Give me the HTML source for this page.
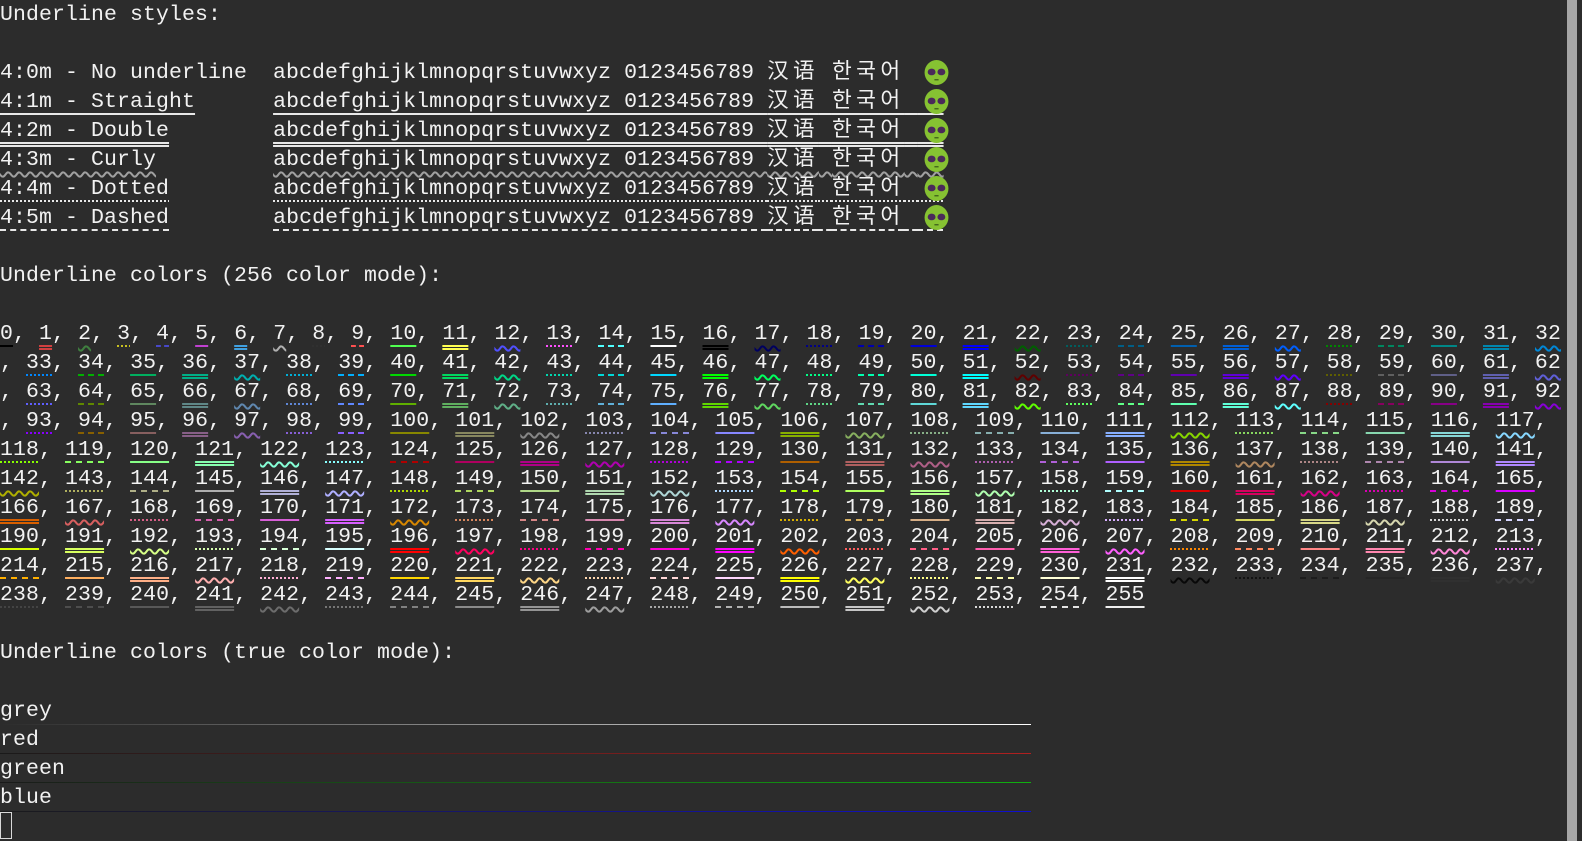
<!DOCTYPE html>
<html><head><meta charset="utf-8"><style>
html,body{margin:0;padding:0;background:#2c2c2c;width:1582px;height:841px;overflow:hidden}
#wrap{position:absolute;left:0;top:0;width:1582px;height:841px;overflow:hidden}
pre{margin:0;position:absolute;left:0;top:1px;font-family:"Liberation Mono","Noto Sans CJK SC",monospace;font-size:21.5px;letter-spacing:0.1px;line-height:29px;color:#f2f2f2;white-space:pre}
u{text-decoration-line:underline;text-decoration-color:var(--c,#e8e8e8);text-decoration-thickness:2px;text-underline-offset:6px;text-decoration-skip-ink:none}
.a{text-decoration-style:solid}.b{text-decoration-style:double;text-decoration-thickness:1.5px}.c{text-decoration-style:wavy;text-decoration-thickness:1.5px}.d{text-decoration-style:dotted;text-decoration-thickness:1.5px}.e{text-decoration-style:dashed;text-decoration-thickness:1.5px}
.w{letter-spacing:4.4px}
.em{position:relative}
.em svg{position:absolute;left:6px;top:-2px}
.tl{position:absolute;left:0;width:1031px;height:1px}
.cur{position:absolute;left:0;top:812px;width:10px;height:25px;border:1px solid #d8d8d8}
.sb{position:absolute;left:1567px;top:0;width:10px;height:841px;background:#a6a6a6}
</style></head><body><div id="wrap">
<pre>Underline styles:

4:0m - No underline  abcdefghijklmnopqrstuvwxyz 0123456789 <span class=w>汉语</span> <span class=w>한국어</span> <span class=em>  <svg width="25" height="27" viewBox="0 0 24 26"><ellipse cx="12" cy="13" rx="11.5" ry="12" fill="#86c232"/><ellipse cx="7.3" cy="12.5" rx="3.8" ry="3.2" fill="#4a2a5a"/><ellipse cx="16.7" cy="12.5" rx="3.8" ry="3.2" fill="#4a2a5a"/><path d="M10 20 h4" stroke="#3a5a1a" stroke-width="1.2"/></svg></span>
<u class=a>4:1m - Straight</u>      <u class=a>abcdefghijklmnopqrstuvwxyz 0123456789 <span class=w>汉语</span> <span class=w>한국어</span> <span class=em>  <svg width="25" height="27" viewBox="0 0 24 26"><ellipse cx="12" cy="13" rx="11.5" ry="12" fill="#86c232"/><ellipse cx="7.3" cy="12.5" rx="3.8" ry="3.2" fill="#4a2a5a"/><ellipse cx="16.7" cy="12.5" rx="3.8" ry="3.2" fill="#4a2a5a"/><path d="M10 20 h4" stroke="#3a5a1a" stroke-width="1.2"/></svg></span></u>
<u class=b>4:2m - Double</u>        <u class=b>abcdefghijklmnopqrstuvwxyz 0123456789 <span class=w>汉语</span> <span class=w>한국어</span> <span class=em>  <svg width="25" height="27" viewBox="0 0 24 26"><ellipse cx="12" cy="13" rx="11.5" ry="12" fill="#86c232"/><ellipse cx="7.3" cy="12.5" rx="3.8" ry="3.2" fill="#4a2a5a"/><ellipse cx="16.7" cy="12.5" rx="3.8" ry="3.2" fill="#4a2a5a"/><path d="M10 20 h4" stroke="#3a5a1a" stroke-width="1.2"/></svg></span></u>
<u class=c style="--c:#a0a0a0">4:3m - Curly</u>         <u class=c style="--c:#a0a0a0">abcdefghijklmnopqrstuvwxyz 0123456789 <span class=w>汉语</span> <span class=w>한국어</span> <span class=em>  <svg width="25" height="27" viewBox="0 0 24 26"><ellipse cx="12" cy="13" rx="11.5" ry="12" fill="#86c232"/><ellipse cx="7.3" cy="12.5" rx="3.8" ry="3.2" fill="#4a2a5a"/><ellipse cx="16.7" cy="12.5" rx="3.8" ry="3.2" fill="#4a2a5a"/><path d="M10 20 h4" stroke="#3a5a1a" stroke-width="1.2"/></svg></span></u>
<u class=d>4:4m - Dotted</u>        <u class=d>abcdefghijklmnopqrstuvwxyz 0123456789 <span class=w>汉语</span> <span class=w>한국어</span> <span class=em>  <svg width="25" height="27" viewBox="0 0 24 26"><ellipse cx="12" cy="13" rx="11.5" ry="12" fill="#86c232"/><ellipse cx="7.3" cy="12.5" rx="3.8" ry="3.2" fill="#4a2a5a"/><ellipse cx="16.7" cy="12.5" rx="3.8" ry="3.2" fill="#4a2a5a"/><path d="M10 20 h4" stroke="#3a5a1a" stroke-width="1.2"/></svg></span></u>
<u class=e>4:5m - Dashed</u>        <u class=e>abcdefghijklmnopqrstuvwxyz 0123456789 <span class=w>汉语</span> <span class=w>한국어</span> <span class=em>  <svg width="25" height="27" viewBox="0 0 24 26"><ellipse cx="12" cy="13" rx="11.5" ry="12" fill="#86c232"/><ellipse cx="7.3" cy="12.5" rx="3.8" ry="3.2" fill="#4a2a5a"/><ellipse cx="16.7" cy="12.5" rx="3.8" ry="3.2" fill="#4a2a5a"/><path d="M10 20 h4" stroke="#3a5a1a" stroke-width="1.2"/></svg></span></u>

Underline colors (256 color mode):

<u class=a style=--c:#000000>0</u>, <u class=b style=--c:#d04040>1</u>, <u class=c style=--c:#3f7f3f>2</u>, <u class=d style=--c:#c8c020>3</u>, <u class=e style=--c:#4848c8>4</u>, <u class=a style=--c:#c040d0>5</u>, <u class=b style=--c:#40a0e0>6</u>, <u class=c style=--c:#b0b0b0>7</u>, <u class=d style=--c:#303030>8</u>, <u class=e style=--c:#ff5050>9</u>, <u class=a style=--c:#50ff50>10</u>, <u class=b style=--c:#ffff50>11</u>, <u class=c style=--c:#5050ff>12</u>, <u class=d style=--c:#ff50ff>13</u>, <u class=e style=--c:#50ffff>14</u>, <u class=a style=--c:#ffffff>15</u>, <u class=b style=--c:#000000>16</u>, <u class=c style=--c:#00005f>17</u>, <u class=d style=--c:#000087>18</u>, <u class=e style=--c:#0000af>19</u>, <u class=a style=--c:#0000d7>20</u>, <u class=b style=--c:#0000ff>21</u>, <u class=c style=--c:#005f00>22</u>, <u class=d style=--c:#005f5f>23</u>, <u class=e style=--c:#005f87>24</u>, <u class=a style=--c:#005faf>25</u>, <u class=b style=--c:#005fd7>26</u>, <u class=c style=--c:#005fff>27</u>, <u class=d style=--c:#008700>28</u>, <u class=e style=--c:#00875f>29</u>, <u class=a style=--c:#008787>30</u>, <u class=b style=--c:#0087af>31</u>, <u class=c style=--c:#0087d7>32</u>
, <u class=d style=--c:#0087ff>33</u>, <u class=e style=--c:#00af00>34</u>, <u class=a style=--c:#00af5f>35</u>, <u class=b style=--c:#00af87>36</u>, <u class=c style=--c:#00afaf>37</u>, <u class=d style=--c:#00afd7>38</u>, <u class=e style=--c:#00afff>39</u>, <u class=a style=--c:#00d700>40</u>, <u class=b style=--c:#00d75f>41</u>, <u class=c style=--c:#00d787>42</u>, <u class=d style=--c:#00d7af>43</u>, <u class=e style=--c:#00d7d7>44</u>, <u class=a style=--c:#00d7ff>45</u>, <u class=b style=--c:#00ff00>46</u>, <u class=c style=--c:#00ff5f>47</u>, <u class=d style=--c:#00ff87>48</u>, <u class=e style=--c:#00ffaf>49</u>, <u class=a style=--c:#00ffd7>50</u>, <u class=b style=--c:#00ffff>51</u>, <u class=c style=--c:#5f0000>52</u>, <u class=d style=--c:#5f005f>53</u>, <u class=e style=--c:#5f0087>54</u>, <u class=a style=--c:#5f00af>55</u>, <u class=b style=--c:#5f00d7>56</u>, <u class=c style=--c:#5f00ff>57</u>, <u class=d style=--c:#5f5f00>58</u>, <u class=e style=--c:#5f5f5f>59</u>, <u class=a style=--c:#5f5f87>60</u>, <u class=b style=--c:#5f5faf>61</u>, <u class=c style=--c:#5f5fd7>62</u>
, <u class=d style=--c:#5f5fff>63</u>, <u class=e style=--c:#5f8700>64</u>, <u class=a style=--c:#5f875f>65</u>, <u class=b style=--c:#5f8787>66</u>, <u class=c style=--c:#5f87af>67</u>, <u class=d style=--c:#5f87d7>68</u>, <u class=e style=--c:#5f87ff>69</u>, <u class=a style=--c:#5faf00>70</u>, <u class=b style=--c:#5faf5f>71</u>, <u class=c style=--c:#5faf87>72</u>, <u class=d style=--c:#5fafaf>73</u>, <u class=e style=--c:#5fafd7>74</u>, <u class=a style=--c:#5fafff>75</u>, <u class=b style=--c:#5fd700>76</u>, <u class=c style=--c:#5fd75f>77</u>, <u class=d style=--c:#5fd787>78</u>, <u class=e style=--c:#5fd7af>79</u>, <u class=a style=--c:#5fd7d7>80</u>, <u class=b style=--c:#5fd7ff>81</u>, <u class=c style=--c:#5fff00>82</u>, <u class=d style=--c:#5fff5f>83</u>, <u class=e style=--c:#5fff87>84</u>, <u class=a style=--c:#5fffaf>85</u>, <u class=b style=--c:#5fffd7>86</u>, <u class=c style=--c:#5fffff>87</u>, <u class=d style=--c:#870000>88</u>, <u class=e style=--c:#87005f>89</u>, <u class=a style=--c:#870087>90</u>, <u class=b style=--c:#8700af>91</u>, <u class=c style=--c:#8700d7>92</u>
, <u class=d style=--c:#8700ff>93</u>, <u class=e style=--c:#875f00>94</u>, <u class=a style=--c:#875f5f>95</u>, <u class=b style=--c:#875f87>96</u>, <u class=c style=--c:#875faf>97</u>, <u class=d style=--c:#875fd7>98</u>, <u class=e style=--c:#875fff>99</u>, <u class=a style=--c:#878700>100</u>, <u class=b style=--c:#87875f>101</u>, <u class=c style=--c:#878787>102</u>, <u class=d style=--c:#8787af>103</u>, <u class=e style=--c:#8787d7>104</u>, <u class=a style=--c:#8787ff>105</u>, <u class=b style=--c:#87af00>106</u>, <u class=c style=--c:#87af5f>107</u>, <u class=d style=--c:#87af87>108</u>, <u class=e style=--c:#87afaf>109</u>, <u class=a style=--c:#87afd7>110</u>, <u class=b style=--c:#87afff>111</u>, <u class=c style=--c:#87d700>112</u>, <u class=d style=--c:#87d75f>113</u>, <u class=e style=--c:#87d787>114</u>, <u class=a style=--c:#87d7af>115</u>, <u class=b style=--c:#87d7d7>116</u>, <u class=c style=--c:#87d7ff>117</u>, 
<u class=d style=--c:#87ff00>118</u>, <u class=e style=--c:#87ff5f>119</u>, <u class=a style=--c:#87ff87>120</u>, <u class=b style=--c:#87ffaf>121</u>, <u class=c style=--c:#87ffd7>122</u>, <u class=d style=--c:#87ffff>123</u>, <u class=e style=--c:#af0000>124</u>, <u class=a style=--c:#af005f>125</u>, <u class=b style=--c:#af0087>126</u>, <u class=c style=--c:#af00af>127</u>, <u class=d style=--c:#af00d7>128</u>, <u class=e style=--c:#af00ff>129</u>, <u class=a style=--c:#af5f00>130</u>, <u class=b style=--c:#af5f5f>131</u>, <u class=c style=--c:#af5f87>132</u>, <u class=d style=--c:#af5faf>133</u>, <u class=e style=--c:#af5fd7>134</u>, <u class=a style=--c:#af5fff>135</u>, <u class=b style=--c:#af8700>136</u>, <u class=c style=--c:#af875f>137</u>, <u class=d style=--c:#af8787>138</u>, <u class=e style=--c:#af87af>139</u>, <u class=a style=--c:#af87d7>140</u>, <u class=b style=--c:#af87ff>141</u>, 
<u class=c style=--c:#afaf00>142</u>, <u class=d style=--c:#afaf5f>143</u>, <u class=e style=--c:#afaf87>144</u>, <u class=a style=--c:#afafaf>145</u>, <u class=b style=--c:#afafd7>146</u>, <u class=c style=--c:#afafff>147</u>, <u class=d style=--c:#afd700>148</u>, <u class=e style=--c:#afd75f>149</u>, <u class=a style=--c:#afd787>150</u>, <u class=b style=--c:#afd7af>151</u>, <u class=c style=--c:#afd7d7>152</u>, <u class=d style=--c:#afd7ff>153</u>, <u class=e style=--c:#afff00>154</u>, <u class=a style=--c:#afff5f>155</u>, <u class=b style=--c:#afff87>156</u>, <u class=c style=--c:#afffaf>157</u>, <u class=d style=--c:#afffd7>158</u>, <u class=e style=--c:#afffff>159</u>, <u class=a style=--c:#d70000>160</u>, <u class=b style=--c:#d7005f>161</u>, <u class=c style=--c:#d70087>162</u>, <u class=d style=--c:#d700af>163</u>, <u class=e style=--c:#d700d7>164</u>, <u class=a style=--c:#d700ff>165</u>, 
<u class=b style=--c:#d75f00>166</u>, <u class=c style=--c:#d75f5f>167</u>, <u class=d style=--c:#d75f87>168</u>, <u class=e style=--c:#d75faf>169</u>, <u class=a style=--c:#d75fd7>170</u>, <u class=b style=--c:#d75fff>171</u>, <u class=c style=--c:#d78700>172</u>, <u class=d style=--c:#d7875f>173</u>, <u class=e style=--c:#d78787>174</u>, <u class=a style=--c:#d787af>175</u>, <u class=b style=--c:#d787d7>176</u>, <u class=c style=--c:#d787ff>177</u>, <u class=d style=--c:#d7af00>178</u>, <u class=e style=--c:#d7af5f>179</u>, <u class=a style=--c:#d7af87>180</u>, <u class=b style=--c:#d7afaf>181</u>, <u class=c style=--c:#d7afd7>182</u>, <u class=d style=--c:#d7afff>183</u>, <u class=e style=--c:#d7d700>184</u>, <u class=a style=--c:#d7d75f>185</u>, <u class=b style=--c:#d7d787>186</u>, <u class=c style=--c:#d7d7af>187</u>, <u class=d style=--c:#d7d7d7>188</u>, <u class=e style=--c:#d7d7ff>189</u>, 
<u class=a style=--c:#d7ff00>190</u>, <u class=b style=--c:#d7ff5f>191</u>, <u class=c style=--c:#d7ff87>192</u>, <u class=d style=--c:#d7ffaf>193</u>, <u class=e style=--c:#d7ffd7>194</u>, <u class=a style=--c:#d7ffff>195</u>, <u class=b style=--c:#ff0000>196</u>, <u class=c style=--c:#ff005f>197</u>, <u class=d style=--c:#ff0087>198</u>, <u class=e style=--c:#ff00af>199</u>, <u class=a style=--c:#ff00d7>200</u>, <u class=b style=--c:#ff00ff>201</u>, <u class=c style=--c:#ff5f00>202</u>, <u class=d style=--c:#ff5f5f>203</u>, <u class=e style=--c:#ff5f87>204</u>, <u class=a style=--c:#ff5faf>205</u>, <u class=b style=--c:#ff5fd7>206</u>, <u class=c style=--c:#ff5fff>207</u>, <u class=d style=--c:#ff8700>208</u>, <u class=e style=--c:#ff875f>209</u>, <u class=a style=--c:#ff8787>210</u>, <u class=b style=--c:#ff87af>211</u>, <u class=c style=--c:#ff87d7>212</u>, <u class=d style=--c:#ff87ff>213</u>, 
<u class=e style=--c:#ffaf00>214</u>, <u class=a style=--c:#ffaf5f>215</u>, <u class=b style=--c:#ffaf87>216</u>, <u class=c style=--c:#ffafaf>217</u>, <u class=d style=--c:#ffafd7>218</u>, <u class=e style=--c:#ffafff>219</u>, <u class=a style=--c:#ffd700>220</u>, <u class=b style=--c:#ffd75f>221</u>, <u class=c style=--c:#ffd787>222</u>, <u class=d style=--c:#ffd7af>223</u>, <u class=e style=--c:#ffd7d7>224</u>, <u class=a style=--c:#ffd7ff>225</u>, <u class=b style=--c:#ffff00>226</u>, <u class=c style=--c:#ffff5f>227</u>, <u class=d style=--c:#ffff87>228</u>, <u class=e style=--c:#ffffaf>229</u>, <u class=a style=--c:#ffffd7>230</u>, <u class=b style=--c:#ffffff>231</u>, <u class=c style=--c:#080808>232</u>, <u class=d style=--c:#121212>233</u>, <u class=e style=--c:#1c1c1c>234</u>, <u class=a style=--c:#262626>235</u>, <u class=b style=--c:#303030>236</u>, <u class=c style=--c:#3a3a3a>237</u>, 
<u class=d style=--c:#444444>238</u>, <u class=e style=--c:#4e4e4e>239</u>, <u class=a style=--c:#585858>240</u>, <u class=b style=--c:#626262>241</u>, <u class=c style=--c:#6c6c6c>242</u>, <u class=d style=--c:#767676>243</u>, <u class=e style=--c:#808080>244</u>, <u class=a style=--c:#8a8a8a>245</u>, <u class=b style=--c:#949494>246</u>, <u class=c style=--c:#9e9e9e>247</u>, <u class=d style=--c:#a8a8a8>248</u>, <u class=e style=--c:#b2b2b2>249</u>, <u class=a style=--c:#bcbcbc>250</u>, <u class=b style=--c:#c6c6c6>251</u>, <u class=c style=--c:#d0d0d0>252</u>, <u class=d style=--c:#dadada>253</u>, <u class=e style=--c:#e4e4e4>254</u>, <u class=a style=--c:#eeeeee>255</u>

Underline colors (true color mode):

grey
red
green
blue</pre>
<div class="tl" style="top:724px;background:linear-gradient(90deg,#2c2c2c,#ffffff)"></div>
<div class="tl" style="top:753px;background:linear-gradient(90deg,#1a1a1a,#b02020)"></div>
<div class="tl" style="top:782px;background:linear-gradient(90deg,#1a1a1a,#10b010)"></div>
<div class="tl" style="top:811px;background:linear-gradient(90deg,#1a1a1a,#1010d0)"></div>
<div class="cur"></div>
<div class="sb"></div>
</div></body></html>
